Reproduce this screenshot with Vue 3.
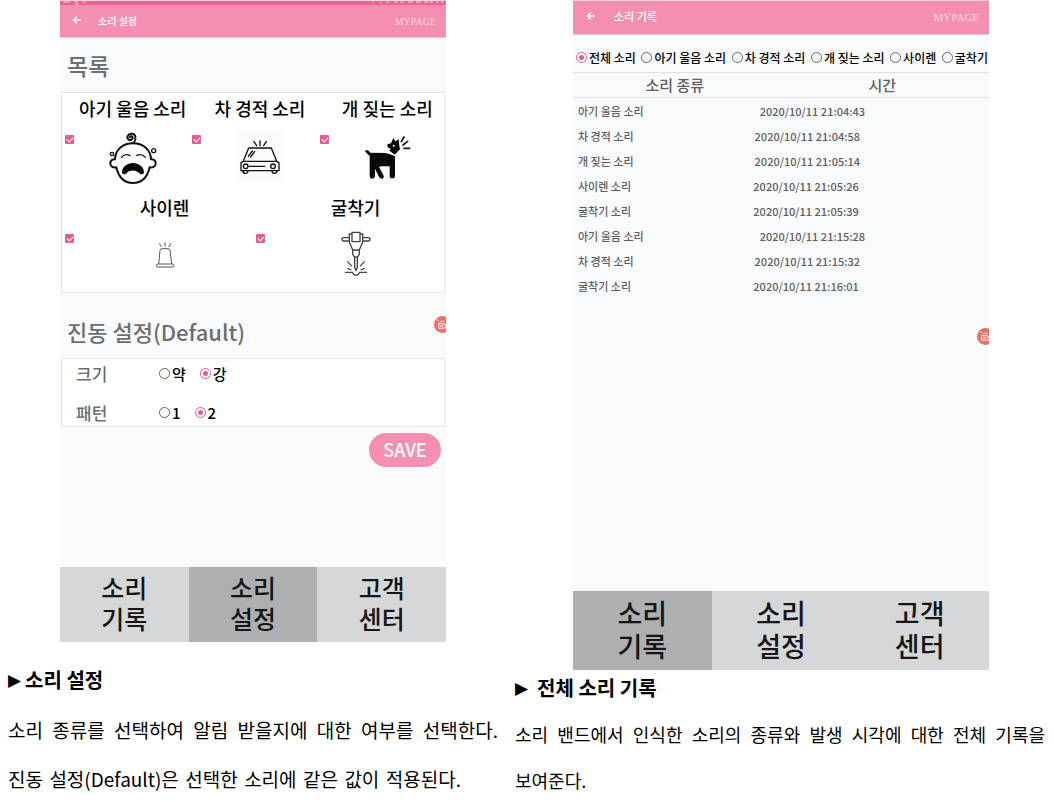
<script setup>
import { ref } from 'vue'

const firstSounds = ref([
  { id: 'baby', label: '아기 울음 소리', on: true },
  { id: 'car', label: '차 경적 소리', on: true },
  { id: 'dog', label: '개 짖는 소리', on: true },
])
const secondSounds = ref([
  { id: 'siren', label: '사이렌', on: true },
  { id: 'drill', label: '굴착기', on: true },
])
const strength = ref('강')
const pattern = ref('2')
const filter = ref('전체 소리')
const filters = ['전체 소리', '아기 울음 소리', '차 경적 소리', '개 짖는 소리', '사이렌', '굴착기']
const records = [
  ['아기 울음 소리', '2020/10/11 21:04:43'],
  ['차 경적 소리', '2020/10/11 21:04:58'],
  ['개 짖는 소리', '2020/10/11 21:05:14'],
  ['사이렌 소리', '2020/10/11 21:05:26'],
  ['굴착기 소리', '2020/10/11 21:05:39'],
  ['아기 울음 소리', '2020/10/11 21:15:28'],
  ['차 경적 소리', '2020/10/11 21:15:32'],
  ['굴착기 소리', '2020/10/11 21:16:01'],
]
const tabs = [['소리', '기록'], ['소리', '설정'], ['고객', '센터']]
</script>

<template>
  <main class="page">
    <section class="column settings">
      <div class="phone">
        <div class="status">
          <svg class="status-left" viewBox="0 0 28 4" aria-hidden="true">
            <path d="M3 1h7M14 1h4M15 3h4M23 1h3" />
          </svg>
          <svg class="status-right" viewBox="0 0 76 4" aria-hidden="true">
            <path d="M2 1h2M10 1l2 1M16 1h3M24 1h4M30 1h4M38 1h5M46 1h5M54 1h4M60 1h3M66 1h3M71 1h2" />
          </svg>
        </div>
        <header class="bar">
          <button class="back" aria-label="뒤로">
            <svg viewBox="0 0 10 10"><path d="M9 5H1.5M5 1.5L1.5 5L5 8.5" /></svg>
          </button>
          <h1>소리 설정</h1>
          <a href="#">MYPAGE</a>
        </header>
        <div class="body">
          <h2 class="list-title">목록</h2>
          <div class="card sounds">
            <div class="sound-row">
              <label v-for="s in firstSounds" :key="s.id" class="sound">
                <span class="name">{{ s.label }}</span>
                <input v-model="s.on" type="checkbox" />
                <svg v-if="s.id === 'baby'" class="icon baby" viewBox="156 134 150 160" aria-hidden="true">
                  <path class="ink thick" fill="#fff" d="M177 218C178 188 202 170 231 170S284 188 285 218C295 217 300 224 299 232C298 240 290 244 281 242C274 273 258 289 231 289S188 273 181 242C172 244 164 240 163 232C162 224 167 217 177 218Z" />
                  <path class="ink thick" fill="none" d="M233 169C242 157 240 140 226 141C215 142 211 153 217 158C224 163 232 157 229 151C227 147 222 148 222 152" />
                  <path class="ink" fill="none" d="M196 212Q208 199 222 207M242 206Q258 200 268 212" />
                  <circle class="ink" fill="#fff" cx="168" cy="202" r="5" />
                  <circle class="ink" fill="#fff" cx="293" cy="192" r="6" />
                  <path class="solid" d="M198 256C199 240 214 229 231 229S263 240 264 256C264 266 252 263 248 258C238 249 221 249 213 258C207 264 198 265 198 256Z" />
                </svg>
                <svg v-else-if="s.id === 'car'" class="icon car" viewBox="-42 137 144 150" aria-hidden="true">
                  <path class="ink" fill="none" d="M30 167V181M12 169L20 181M49 169L41 181M-4 188H64L80 228H-20ZM-20 228L-27 232V256H87V232L80 228M-2 243H44M7 197L-5 213M14 198L2 215M-22 257Q-20 265-12 264Q-6 263-6 257M66 257Q66 264 73 264Q81 264 81 257" />
                  <circle class="ink" fill="none" cx="-13" cy="243" r="7" />
                  <circle class="ink" fill="none" cx="69" cy="243" r="7" />
                </svg>
                <svg v-else class="icon dog" viewBox="339 137 150 150" aria-hidden="true">
                  <path class="solid" d="M351 194Q359 193 364 202L409 203L421 206L438 213V272Q438 279 430 279Q422 279 422 272V243H399L390 244L404 271Q406 279 398 280Q393 281 389 273L378 250V272Q377 280 369 280Q362 279 362 272V212L350 201Q347 197 351 194Z" />
                  <path class="solid" d="M433 158L439 168L449 162L451 182L453 192L437 208L420 195L426 192L416 186L415 177L426 174Z" />
                  <circle cx="434" cy="181" r="3" fill="#fff" />
                  <path class="ink medium" d="M457 169L465 155M462 179L476 168M465 189H482" />
                </svg>
              </label>
            </div>
            <div class="sound-row">
              <label v-for="s in secondSounds" :key="s.id" class="sound">
                <span class="name">{{ s.label }}</span>
                <input v-model="s.on" type="checkbox" />
                <svg v-if="s.id === 'siren'" class="icon siren" viewBox="251 123 150 150" aria-hidden="true">
                  <path class="fine" d="M307 225L311 184Q312 179 317 179H335Q340 179 341 184L346 225M305 225H348Q353 225 353 230Q353 234 348 234H305Q300 234 300 230Q300 225 305 225ZM326 160V173M309 163L316 174M344 163L337 174" />
                </svg>
                <svg v-else class="icon drill" viewBox="240 126 150 150" aria-hidden="true">
                  <path class="fine drill-line" d="M303 133H327V161H303ZM303 138H295V163L305 186V198L310 207H320L325 198V186L335 163V138H327M295 149H279Q273 149 273 154Q273 159 279 159H295M335 149H351Q357 149 357 154Q357 159 351 159H335M304 186H326M311 207V238L315 247L319 238V207M282 253H304Q307 261 315 262Q323 261 326 253H348M289 220L303 235M341 220L327 235M289 241L301 246M341 241L329 246" />
                </svg>
              </label>
            </div>
          </div>
          <h2 class="vibration-title">진동 설정(Default)</h2>
          <div class="card vibration">
            <div class="option-row">
              <h3>크기</h3>
              <label v-for="v in ['약', '강']" :key="v"><input v-model="strength" type="radio" name="strength" :value="v" />{{ v }}</label>
            </div>
            <div class="option-row">
              <h3>패턴</h3>
              <label v-for="v in ['1', '2']" :key="v"><input v-model="pattern" type="radio" name="pattern" :value="v" />{{ v }}</label>
            </div>
          </div>
          <button class="save">SAVE</button>
        </div>
        <nav>
          <a v-for="(t, i) in tabs" :key="i" href="#" :class="{ active: i === 1 }">{{ t[0] }}<br />{{ t[1] }}</a>
        </nav>
        <button class="record" aria-label="녹화">
          <svg viewBox="0 0 18 18"><path class="cam" d="M5 8H11V10L13 9V13L11 12V13H5ZM6 7Q8 4 11 6" /><circle cx="8" cy="10.5" r="1" /><path class="spark" d="M3 4L5 5" /></svg>
        </button>
      </div>
      <div class="caption">
        <h2><span class="mark">▶</span>소리 설정</h2>
        <p class="full">소리 종류를 선택하여 알림 받을지에 대한 여부를 선택한다.</p>
        <p class="short">진동 설정(Default)은 선택한 소리에 같은 값이 적용된다.</p>
      </div>
    </section>

    <section class="column history">
      <div class="phone">
        <header class="bar">
          <button class="back" aria-label="뒤로">
            <svg viewBox="0 0 10 10"><path d="M9 5H1.5M5 1.5L1.5 5L5 8.5" /></svg>
          </button>
          <h1>소리 기록</h1>
          <a href="#">MYPAGE</a>
        </header>
        <div class="body">
          <div class="filters">
            <label v-for="f in filters" :key="f"><input v-model="filter" type="radio" name="filter" :value="f" />{{ f }}</label>
          </div>
          <table>
            <thead>
              <tr><th>소리 종류</th><th>시간</th></tr>
            </thead>
            <tbody>
              <tr v-for="(r, i) in records" :key="i"><td>{{ r[0] }}</td><td>{{ r[1] }}</td></tr>
            </tbody>
          </table>
        </div>
        <nav>
          <a v-for="(t, i) in tabs" :key="i" href="#" :class="{ active: i === 0 }">{{ t[0] }}<br />{{ t[1] }}</a>
        </nav>
        <button class="record" aria-label="녹화">
          <svg viewBox="0 0 18 18"><path class="cam" d="M5 8H11V10L13 9V13L11 12V13H5ZM6 7Q8 4 11 6" /><circle cx="8" cy="10.5" r="1" /><path class="spark" d="M3 4L5 5" /></svg>
        </button>
      </div>
      <div class="caption">
        <h2><span class="mark">▶</span>전체 소리 기록</h2>
        <p>소리 밴드에서 인식한 소리의 종류와 발생 시각에 대한 전체 기록을 보여준다.</p>
      </div>
    </section>
  </main>
</template>

<style>
body {
  background: #fff;
}
</style>

<style scoped>
* {
  box-sizing: border-box;
}
.page {
  display: grid;
  grid-template-columns: 507fr 547fr;
  font-family: "Noto Sans CJK KR", sans-serif;
  color: #000;
}
h1, h2, h3, p {
  margin: 0;
}
button {
  border: 0;
  padding: 0;
  font-family: inherit;
}
a {
  color: inherit;
  text-decoration: none;
}
.phone {
  position: relative;
  overflow: hidden;
  background: #f9fafc;
}
.settings .phone {
  margin: 0 61px 0 60px;
}
.history .phone {
  margin: 0 65px 0 66px;
}

.status {
  display: flex;
  justify-content: space-between;
  height: 5px;
  background: #ed6292;
  border-top: 1px solid #f9d3df;
}
.status svg {
  height: 4px;
  fill: none;
  stroke: #fbd0de;
}
.status-left {
  width: 28px;
}
.status-right {
  width: 76px;
}
.bar {
  display: flex;
  align-items: center;
  height: 33px;
  padding: 0 10px 2px 12px;
  background: #f48fb1;
  border-bottom: 1px solid #dccdd4;
  color: #fff;
}
.bar a {
  padding-top: 3px;
  margin-left: auto;
  font: 10px "Liberation Serif", serif;
  color: #fbd5e1;
}
.history .bar {
  height: 35px;
  padding-bottom: 4px;
  padding-left: 13px;
  border-top: 1px solid #f9d3df;
}
.back {
  display: flex;
  margin-right: 16px;
  background: none;
}
.back svg {
  width: 10px;
  height: 10px;
  fill: none;
  stroke: #fff;
  stroke-width: 1.4;
}
.history .back {
  margin-right: 18px;
}
.bar h1 {
  font-size: 10px;
  font-weight: 500;
}
.history .bar h1 {
  font-size: 11px;
}
.history .bar a {
  font-size: 11px;
}

.settings .body {
  padding: 0 1px 100px;
}
.body h2 {
  padding-left: 6px;
  color: #6e6e6e;
  font-size: 23px;
  font-weight: 500;
}
.list-title {
  line-height: 54px;
}
.body .vibration-title {
  padding-top: 11px;
  font-size: 22px;
  line-height: 54px;
}
.card {
  background: #fff;
  border: 1px solid #e6e7e8;
}
.sounds {
  height: 201px;
}
.sound-row {
  display: flex;
  height: 99px;
}
.sound {
  flex: 1 1 0;
  display: grid;
  grid-template-columns: 11px 1fr;
  grid-template-rows: 31px 1fr;
  justify-items: center;
  align-items: start;
  padding-left: 3px;
}
.name {
  grid-column: 2;
  font-size: 18px;
  font-weight: 500;
  line-height: 31px;
  white-space: nowrap;
}
.sound input {
  appearance: none;
  justify-self: start;
  width: 9px;
  height: 9px;
  margin: 11px 0 0;
  border-radius: 1px;
  background: #e55c92;
}
.sound input:checked::before {
  content: "";
  display: block;
  width: 3px;
  height: 5px;
  margin: 1px 3px;
  border: solid #fff;
  border-width: 0 1px 1px 0;
  transform: rotate(45deg);
}
.icon {
  width: 50px;
  height: 50px;
  margin-top: 7px;
}
.baby {
  height: 54px;
}
.car {
  background: #fbfbfb;
}
.ink {
  stroke: #111;
  stroke-width: 4;
  stroke-linecap: round;
  stroke-linejoin: round;
}
.medium {
  stroke-width: 5;
}
.thick {
  stroke-width: 6;
}
.solid {
  fill: #080808;
}
.fine {
  fill: none;
  stroke: #555;
  stroke-width: 3;
}
.drill-line {
  stroke: #444;
  stroke-width: 4;
}

.vibration {
  height: 69px;
  padding-left: 14px;
}
.option-row {
  display: flex;
  align-items: center;
  height: 28px;
}
.option-row + .option-row {
  margin-top: 11px;
}
.option-row h3 {
  width: 83px;
  color: #6e6e6e;
  font-size: 17px;
  font-weight: 500;
}
.option-row label {
  display: flex;
  align-items: center;
  gap: 2px;
  margin-right: 14px;
  font-size: 15px;
  font-weight: 500;
}
input[type="radio"] {
  appearance: none;
  flex: none;
  width: 11px;
  height: 11px;
  margin: 0;
  padding: 2px;
  border: 1px solid #666;
  border-radius: 50%;
}
input[type="radio"]:checked {
  border-color: #e55c92;
}
input[type="radio"]:checked::before {
  content: "";
  display: block;
  width: 5px;
  height: 5px;
  border-radius: 50%;
  background: #e55c92;
}
.save {
  display: block;
  width: 72px;
  height: 34px;
  padding-bottom: 2px;
  margin: 6px 4px 0 auto;
  border-radius: 17px;
  background: #f48fb1;
  color: #fff;
  font-size: 18px;
  font-weight: 500;
}
nav {
  display: grid;
  grid-template-columns: repeat(3, 1fr);
  background: #d6d7d8;
  color: #151515;
  text-align: center;
}
nav a {
  padding: 5px 0 8px;
  font-size: 25px;
  font-weight: 500;
  line-height: 31px;
}
.history nav a {
  font-size: 27px;
  line-height: 33px;
}
nav .active {
  background: #aeafb0;
}
.record {
  position: absolute;
  top: 316px;
  right: -5px;
  width: 17px;
  height: 17px;
  border-radius: 50%;
  background: #ee6f63;
}
.history .record {
  top: 328px;
}
.record svg {
  display: block;
  fill: none;
  stroke: #fff;
}

.history .body {
  height: 556px;
}
.filters {
  display: flex;
  justify-content: space-between;
  align-items: center;
  height: 37px;
  padding: 8px 1px 0 3px;
}
.filters label {
  display: flex;
  align-items: center;
  gap: 2px;
  font-size: 12px;
  font-weight: 500;
  white-space: nowrap;
}
table {
  display: block;
  color: #5e5e5e;
  font-size: 11px;
  font-weight: 500;
}
thead, tbody {
  display: block;
}
tr {
  display: flex;
  align-items: center;
  height: 25px;
  padding-right: 8px;
}
thead tr {
  height: 26px;
  padding-right: 5px;
  border: solid #dfe0e1;
  border-width: 1px 0;
}
th {
  flex: 1 1 0;
  padding: 0 4px 2px 0;
  font-size: 15px;
  font-weight: 500;
}
th + th {
  padding-right: 0;
}
td {
  flex: 1 1 auto;
  padding: 0;
}
td:first-child {
  padding-left: 5px;
}

.caption h2 {
  display: flex;
  align-items: center;
  font-size: 20px;
  font-weight: 700;
}
.mark {
  padding-top: 2px;
  font-family: "DejaVu Sans", sans-serif;
  font-size: 17px;
  font-weight: 400;
}
.settings .caption {
  padding: 12px 9px 0 8px;
  font-size: 19px;
  line-height: 49px;
}
.settings .mark {
  margin-right: 4px;
}
.caption p {
  text-align: justify;
  word-break: keep-all;
}
.caption .full, .caption .short {
  text-align-last: justify;
}
.caption .short {
  padding-right: 37px;
}
.history .caption {
  padding: 0 9px 0 8px;
  font-size: 18px;
  line-height: 46px;
}
.history .caption h2 {
  margin-bottom: 6px;
  font-size: 20px;
  line-height: 33px;
}
.history .mark {
  margin-right: 9px;
}
</style>
